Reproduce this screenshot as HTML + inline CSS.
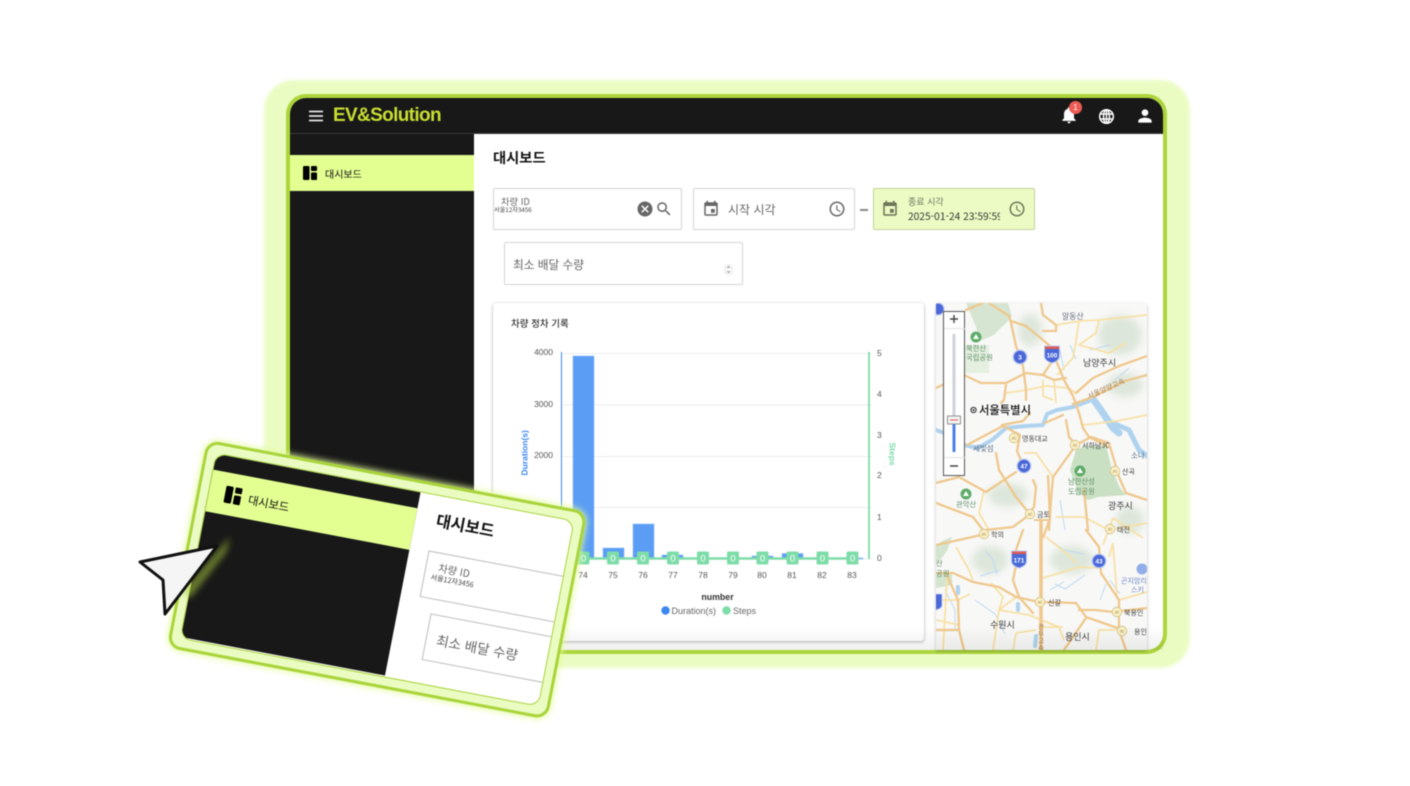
<!DOCTYPE html>
<html lang="ko"><head><meta charset="utf-8"><title>EV&amp;Solution</title>
<style>
html,body{margin:0;padding:0;background:#fff}
body{width:1410px;height:786px;overflow:hidden;position:relative;font-family:"Noto Sans CJK KR","Liberation Sans",sans-serif}
#root{position:absolute;left:0;top:0;width:1410px;height:786px;filter:blur(.4px)}
.a{position:absolute;box-sizing:border-box;white-space:nowrap}
svg{display:block}
.field{border:1px solid #d4d4d4;border-radius:2px;background:#fff}
.g{color:#666}
</style></head><body><div id="root">
<div class="a" style="left:264px;top:80px;width:926px;height:588px;background:#ebfcc3;border-radius:30px;filter:blur(1.500px)"></div>
<div class="a" style="left:286px;top:94px;width:881px;height:560px;background:#acd53c;border-radius:20px"></div>
<div class="a" style="left:290px;top:98px;width:873px;height:552px;background:#fff;border-radius:16px;overflow:hidden">
  <div class="a" style="left:0;top:0;width:873px;height:36px;background:#181818;border-bottom:1px solid #3a3a3a"></div>
  <div class="a" style="left:0;top:36px;width:184px;height:516px;background:#181818"></div>
  <div class="a" style="left:0;top:57px;width:184px;height:36px;background:#e3fe91"></div>
</div>
<svg class="a" style="left:309px;top:110px" width="14" height="12"><path d="M0 1.500h14M0 6h14M0 10.500h14" stroke="#fff" stroke-width="1.600"/></svg>
<div class="a" style="left:333px;top:104px;font-family:'Liberation Sans',sans-serif;font-size:19px;line-height:23px;font-weight:700;color:#c9de30;letter-spacing:-.65px">EV&amp;Solution</div>
<svg class="a" style="left:1059px;top:105px" width="20" height="20" viewBox="0 0 24 24"><path fill="#fff" d="M12 22c1.100 0 2-.9 2-2h-4c0 1.100.9 2 2 2zm6-6v-5c0-3.070-1.630-5.640-4.500-6.320V4c0-.83-.67-1.500-1.500-1.500s-1.500.67-1.500 1.500v.68C7.640 5.360 6 7.920 6 11v5l-2 2v1h16v-1l-2-2z"/></svg>
<div class="a" style="left:1069px;top:101px;width:13px;height:13px;border-radius:50%;background:#ee5b52;color:#fff;font-family:'Liberation Sans',sans-serif;font-size:8px;line-height:13px;text-align:center">1</div>
<svg class="a" style="left:1098px;top:107.500px" width="17" height="17" viewBox="0 0 17 17" fill="none" stroke="#fff" stroke-width="1.500"><circle cx="8.500" cy="8.500" r="6.800"/><ellipse cx="8.500" cy="8.500" rx="3" ry="6.800"/><path d="M2 6h13M2 11h13M8.500 2v13"/></svg>
<svg class="a" style="left:1135px;top:105.500px" width="20" height="20" viewBox="0 0 24 24"><path fill="#fff" d="M12 12c2.210 0 4-1.790 4-4s-1.790-4-4-4-4 1.790-4 4 1.790 4 4 4zm0 2c-2.670 0-8 1.340-8 4v2h16v-2c0-2.660-5.330-4-8-4z"/></svg>
<svg class="a" style="left:303px;top:166px" width="15" height="15"><rect x="0" y="0" width="6.500" height="14" rx="1.200" fill="#000"/><rect x="8" y="0" width="6" height="5" rx="1" fill="#000"/><rect x="8" y="6.500" width="6" height="7.500" rx="1" fill="#000"/></svg>
<div class="a" style="left:325px;top:166px;font-size:10px;line-height:15px;color:#111">대시보드</div>
<div class="a" style="left:493px;top:148px;font-size:14.300px;line-height:20px;font-weight:700;color:#111">대시보드</div>

<div class="a field" style="left:493px;top:188px;width:189px;height:42px"></div>
<div class="a g" style="left:501px;top:195px;font-size:9.300px;line-height:13px">차량 ID</div>
<div class="a" style="left:494px;top:204px;font-size:6.200px;line-height:11px;color:#444">서울12자3456</div>
<svg class="a" style="left:636px;top:200px" width="18" height="18" viewBox="0 0 24 24"><path fill="#666" d="M12 2C6.470 2 2 6.470 2 12s4.470 10 10 10 10-4.470 10-10S17.530 2 12 2zm5 13.590L15.590 17 12 13.410 8.410 17 7 15.590 10.590 12 7 8.410 8.410 7 12 10.590 15.590 7 17 8.410 13.410 12 17 15.590z"/></svg>
<svg class="a" style="left:655px;top:200px" width="18" height="18" viewBox="0 0 24 24"><path fill="#666" d="M15.500 14h-.79l-.28-.27C15.410 12.590 16 11.110 16 9.500 16 5.910 13.090 3 9.500 3S3 5.910 3 9.500 5.910 16 9.500 16c1.610 0 3.090-.59 4.230-1.570l.27.28v.79l5 4.990L20.490 19l-4.990-5zm-6 0C7.010 14 5 11.990 5 9.500S7.010 5 9.500 5 14 7.010 14 9.500 11.990 14 9.500 14z"/></svg>

<div class="a field" style="left:693px;top:188px;width:162px;height:42px"></div>
<svg class="a" style="left:702px;top:200px" width="18" height="18" viewBox="0 0 24 24"><path fill="#666" d="M17 12h-5v5h5v-5zM16 1v2H8V1H6v2H5c-1.110 0-1.990.9-1.990 2L3 19c0 1.100.89 2 2 2h14c1.100 0 2-.9 2-2V5c0-1.100-.9-2-2-2h-1V1h-2zm3 18H5V8h14v11z"/></svg>
<div class="a g" style="left:728px;top:201px;font-size:12px;line-height:18px">시작 시각</div>
<svg class="a" style="left:828px;top:200px" width="18" height="18" viewBox="0 0 24 24"><path fill="#666" d="M11.990 2C6.470 2 2 6.480 2 12s4.470 10 9.990 10C17.520 22 22 17.520 22 12S17.520 2 11.990 2zM12 20c-4.420 0-8-3.580-8-8s3.580-8 8-8 8 3.580 8 8-3.580 8-8 8zm.5-13H11v6l5.250 3.150.75-1.230-4.500-2.670z"/></svg>
<div class="a" style="left:860px;top:209px;width:8px;height:1.500px;background:#888"></div>

<div class="a" style="left:873px;top:188px;width:162px;height:42px;background:#ebfbc3;border:1px solid #c3d39a;border-radius:2px"></div>
<svg class="a" style="left:881px;top:200px" width="18" height="18" viewBox="0 0 24 24"><path fill="#6d7559" d="M17 12h-5v5h5v-5zM16 1v2H8V1H6v2H5c-1.110 0-1.990.9-1.990 2L3 19c0 1.100.89 2 2 2h14c1.100 0 2-.9 2-2V5c0-1.100-.9-2-2-2h-1V1h-2zm3 18H5V8h14v11z"/></svg>
<div class="a" style="left:908px;top:195px;font-size:9px;line-height:13px;color:#6f7560">종료 시각</div>
<div class="a" style="left:908px;top:208px;width:92px;overflow:hidden;font-size:10.200px;line-height:16px;color:#333">2025-01-24 23:59:59</div>
<svg class="a" style="left:1008px;top:200px" width="18" height="18" viewBox="0 0 24 24"><path fill="#6d7559" d="M11.990 2C6.470 2 2 6.480 2 12s4.470 10 9.990 10C17.520 22 22 17.520 22 12S17.520 2 11.990 2zM12 20c-4.420 0-8-3.580-8-8s3.580-8 8-8 8 3.580 8 8-3.580 8-8 8zm.5-13H11v6l5.250 3.150.75-1.230-4.500-2.670z"/></svg>

<div class="a field" style="left:504px;top:242px;width:239px;height:43px"></div>
<div class="a g" style="left:513px;top:256px;font-size:11.700px;line-height:18px">최소 배달 수량</div>
<svg class="a" style="left:724px;top:264px" width="9" height="11" fill="none" stroke="#777" stroke-width=".8"><rect x="1" y="0.500" width="7" height="10" rx="3" stroke="#ddd"/><path d="M3 4l1.500-1.500L6 4M3 7l1.500 1.500L6 7"/></svg>

<!-- chart card -->
<div class="a" style="left:493px;top:303px;width:431px;height:338px;background:#fff;border-radius:3px;box-shadow:0 1px 3px rgba(0,0,0,.28),0 0 2px rgba(0,0,0,.08)"></div>
<svg class="a" style="left:493px;top:303px" width="431" height="338" viewBox="493 303 431 338">
<g stroke="#ececec" stroke-width="1"><path d="M563 353.500H872M563 405H872M563 456.500H872M563 507.500H872M563 559H872"/></g>
<path d="M561.500 352V559" stroke="#3b87ee" stroke-width="1"/>
<path d="M869 352V559" stroke="#7edca9" stroke-width="1.800"/>
<g fill="#5b9df5" stroke="#8cbcf8" stroke-width=".6">
<rect x="573" y="356" width="21" height="203"/><rect x="603" y="548" width="21" height="11"/><rect x="633" y="524" width="21" height="35"/><rect x="662" y="555" width="21" height="4"/><rect x="752" y="556" width="21" height="3"/><rect x="782" y="553.500" width="21" height="5.500"/><rect x="812" y="558" width="21" height="1"/><rect x="842" y="558" width="21" height="1"/></g>
<path d="M578 558.500H858" stroke="#7edca9" stroke-width="2.400"/>
<g fill="#7edca9"><rect x="577.500" y="551.500" width="12" height="13" rx="1.500"/><rect x="607" y="551.500" width="12" height="13" rx="1.500"/><rect x="637" y="551.500" width="12" height="13" rx="1.500"/><rect x="667" y="551.500" width="12" height="13" rx="1.500"/><rect x="697" y="551.500" width="12" height="13" rx="1.500"/><rect x="727" y="551.500" width="12" height="13" rx="1.500"/><rect x="756.500" y="551.500" width="12" height="13" rx="1.500"/><rect x="786.500" y="551.500" width="12" height="13" rx="1.500"/><rect x="816.500" y="551.500" width="12" height="13" rx="1.500"/><rect x="846.500" y="551.500" width="12" height="13" rx="1.500"/></g>
<g fill="#fff" font-size="9.500" text-anchor="middle" font-family="Liberation Sans"><text x="583.500" y="561.500">0</text><text x="613" y="561.500">0</text><text x="643" y="561.500">0</text><text x="673" y="561.500">0</text><text x="703" y="561.500">0</text><text x="733" y="561.500">0</text><text x="762.500" y="561.500">0</text><text x="792.500" y="561.500">0</text><text x="822.500" y="561.500">0</text><text x="852.500" y="561.500">0</text></g>
<g fill="#555" font-size="8.500" font-family="Liberation Sans">
<g text-anchor="end"><text x="553" y="355">4000</text><text x="553" y="407">3000</text><text x="553" y="458">2000</text></g>
<text x="877" y="356">5</text><text x="877" y="397">4</text><text x="877" y="438">3</text><text x="877" y="478">2</text><text x="877" y="520">1</text><text x="877" y="561">0</text>
<g text-anchor="middle"><text x="583" y="578">74</text><text x="613" y="578">75</text><text x="643" y="578">76</text><text x="673" y="578">77</text><text x="703" y="578">78</text><text x="733" y="578">79</text><text x="762" y="578">80</text><text x="792" y="578">81</text><text x="822" y="578">82</text><text x="852" y="578">83</text></g></g>
<text transform="translate(527.500 475.500) rotate(-90)" fill="#3b87ee" font-size="8.500" font-weight="700" font-family="Liberation Sans">Duration(s)</text>
<text transform="translate(889.500 442.500) rotate(90)" fill="#7edca9" font-size="8.500" font-weight="700" font-family="Liberation Sans">Steps</text>
<text x="717.500" y="600" text-anchor="middle" fill="#333" font-size="8.800" font-weight="700" font-family="Liberation Sans">number</text>
<circle cx="665.500" cy="610.500" r="4.200" fill="#3b87ee"/><circle cx="726.500" cy="610.500" r="4.200" fill="#7edca9"/>
<text x="671.500" y="614" fill="#666" font-size="9" font-family="Liberation Sans">Duration(s)</text>
<text x="733" y="614" fill="#666" font-size="9" font-family="Liberation Sans">Steps</text>
<text x="511" y="327" fill="#333" font-size="9.500" font-weight="500" font-family="Noto Sans CJK KR,sans-serif">차량 정차 기록</text>
</svg>

<!-- map -->
<div class="a" style="left:936px;top:303px;width:211px;height:347px;box-shadow:0 1px 3px rgba(0,0,0,.25);border-radius:3px 3px 0 0;background:#f8f8f7"></div>
<svg class="a" style="left:936px;top:303px" width="211" height="347" viewBox="936 303 211 347" font-family="Noto Sans CJK KR,Liberation Sans,sans-serif">
<defs><filter id="b" x="-30%" y="-30%" width="160%" height="160%"><feGaussianBlur stdDeviation="4"/></filter></defs>
<path d="M966 303h42l4 14-18 18-14 6-4-14z" fill="#d6e5d2"/>
<rect x="965" y="345" width="24" height="28" fill="#e4efe0"/>
<g fill="#dde6da" filter="url(#b)"><ellipse cx="1030" cy="330" rx="12" ry="16"/><ellipse cx="1120" cy="335" rx="22" ry="20"/><ellipse cx="1125" cy="385" rx="18" ry="12"/><ellipse cx="1008" cy="495" rx="20" ry="12"/><ellipse cx="1072" cy="560" rx="22" ry="14"/><ellipse cx="990" cy="560" rx="18" ry="14"/><ellipse cx="1130" cy="520" rx="14" ry="14"/></g>
<path d="M1076 450L1086 446 1106 445 1112 470 1120 488 1126 495 1098 497 1088 500 1078 492 1070 470Z" fill="#c9e0c2"/>
<path d="M936 545l8-5 8-3-5 14-11 14zM936 575l16-2 0 12-16 3z" fill="#d3e5cf"/>
<g fill="none" stroke="#afd3ef" stroke-linejoin="round" stroke-linecap="round">
<path d="M936 430l8 3M964 445l14 3 14-8 14-12 20-2 17-1 4-11 10-4 16-3 16-6" stroke-width="4"/>
<path d="M1093 399l10 14 10 15 6 5" stroke-width="7"/>
<path d="M1106 420l23 10 10 20 8 6M1147 303" stroke-width="5"/>
<path d="M958 587l0 6M1018 604l0 6M1036 636l-1 10" stroke-width="4"/></g>
<g fill="none" stroke="#bdd9f2" stroke-width="1"><path d="M985 550l8 10 4 14M945 590l10 20 0 20M1050 540l14 10 20 4M1110 580l10 14M1060 500l5 30M1085 575l-20 14-10-5M975 600l20 14 10 20M1115 380l14-12M1060 350l4 20M1090 350l20-5M1000 570l-20 6M1050 590l14-8M1070 345l6 14M1100 600l6-16"/></g>
<g fill="none" stroke="#f7e1a6" stroke-width="1.800" stroke-linejoin="round">
<path d="M1056 325l23-4 20-1 48-5M1099 320l-3 13-17 12 30 8 17-10M1079 321l-3 20-3 17-16 17"/>
<path d="M1006 393l20-3 20-4 22 2 8 5M1043 380v16l10 4M1054 380l2 23"/>
<path d="M1083 425l34-4 30-6M1053 477l-17-24-12 0M984 490l-5 23 10 17M1056 517l28 0 25 13 38-7"/>
<path d="M956 547l13 23 4 10M991 583l12 14-4 13 30 5 30 12 5 13M1043 578l36-11 22 1M1046 537l20 16 10 10M1109 557l4-14M1119 600l28-8"/>
<path d="M1016 597l-17 13-6 40M936 600l22 0 12-6M1013 650l3-17 20-3M1043 627l20 0M1096 650l3-20 17 0M1113 518l30 20M1103 545l10-27M1113 545l4 50M947 578l-4 72M936 620l23 5"/>
</g>
<g fill="none" stroke="#efc88d" stroke-width="2.300" stroke-linejoin="round" stroke-linecap="round">
<path d="M989 303l20 13 2 7 5 23 7 20 3 24v10"/><path d="M1011 321l15 5 17 14 7 6"/><path d="M1041 303l2 12 13 10v6h-13"/><path d="M966 310l17-7"/>
<path d="M1053 360l-10 15 11 5 12-2M1056 360l8 20 9 16 6 17 4 15 6 9 18 9"/><path d="M936 388l28-13 17 8h25l20-10 17 2"/><path d="M1006 385l-2 15-3 3"/>
<path d="M1076 393l17-15 26-12 28-10"/><path d="M1073 404l20-7 32-16 22-6"/>
<path d="M1002 425l21-4 7-8M1045 423l18-8"/>
<path d="M967 445l36-19 17 9-3 16 6 14"/>
<path d="M1066 420l3 17 7 8 15-8 18 6 10 34 7 16 21 7"/><path d="M1076 445l-23 32-2 23-2 30"/><path d="M996 453l3 17 17 27 13 16"/><path d="M936 483l23-6 27 15 30-20"/><path d="M1033 480l3 7-2 20-5 6"/><path d="M1084 490l4 40"/>
<path d="M936 503l37 14 10 13M1029 515l-16 12-27 3"/>
<path d="M936 573h17l20 9 26 5 17 10 23 5 37 1 10 14 37 13"/><path d="M936 545l23-5 22-5"/><path d="M1016 565l-3 15 6 17 14 16"/><path d="M1023 530l-7 20"/><path d="M1086 530l13 17 2 26 18 27v30l7 20"/><path d="M946 573l12 27 1 30 5 20"/><path d="M936 630l23 0"/><path d="M1079 610h17l17 2 34-4"/><path d="M1086 618l-22 32"/>
</g>
<path d="M1041 520V650" stroke="#efc88d" stroke-width="3.500" fill="none"/>
<path d="M1048 475l2 43-7 20" stroke="#efc88d" stroke-width="2.300" fill="none"/>
<path d="M1034 520l16 0" stroke="#efc88d" stroke-width="2" fill="none"/>
<text transform="translate(1089 399) rotate(-24)" font-size="7.200" fill="#a87b4a">서울양양고속</text>
<g font-size="6.500" fill="#a87b4a" text-anchor="middle"><text x="1041" y="629">경</text><text x="1041" y="636">부</text><text x="1041" y="643">고</text><text x="1041" y="650">속</text></g>
<text x="1062" y="319" font-size="7.800" fill="#5f6a7b">알동산</text>
<g font-size="9" fill="#3c3c3c"><text x="1083" y="366">남양주시</text><text x="1108" y="509">광주시</text><text x="990" y="628">수원시</text><text x="1065" y="640">용인시</text></g>
<text x="979" y="414" font-size="11.300" fill="#111" font-weight="500">서울특별시</text>
<circle cx="973.500" cy="410" r="2.600" fill="#fff" stroke="#222"/><circle cx="973.500" cy="410" r="1" fill="#222"/>
<g font-size="7.300" fill="#5d8f66"><text x="1068" y="484">남한산성</text><text x="1068" y="494">도립공원</text><text x="966" y="351">북한산</text><text x="966" y="360">국립공원</text><text x="956" y="507">관악산</text><text x="936" y="566">산</text><text x="936" y="576">공원</text></g>
<g font-size="7.500" fill="#5a6b85"><text x="973" y="451">세빛섬</text><text x="1131" y="458">소나</text></g>
<g font-size="7" fill="#444"><text x="1022" y="441">영동대교</text><text x="1082" y="448">서하남JC</text><text x="1122" y="474">산곡</text><text x="1037" y="517">금토</text><text x="991" y="537">학의</text><text x="1117" y="532">태전</text><text x="1048" y="605">신갈</text><text x="1124" y="615">북용인</text><text x="1134" y="634">용인</text></g>
<g font-size="7" fill="#6d83c4"><text x="1121" y="583">곤지암리</text><text x="1131" y="592">스키</text></g>
<g fill="#5eac6a"><circle cx="976" cy="337" r="5.500"/><circle cx="1080" cy="471" r="5.500"/><circle cx="966" cy="494" r="5.500"/></g>
<g fill="#fff"><path d="M976 334l-3 5h6zM1080 468l-3 5h6zM966 491l-3 5h6z"/></g>
<circle cx="1142" cy="569" r="5.500" fill="#92aeea"/>
<g fill="#f9efc4" stroke="#d2c08a" stroke-width=".8"><circle cx="1014" cy="438" r="4.800"/><circle cx="1075" cy="445" r="4.800"/><circle cx="1115" cy="471" r="4.800"/><circle cx="1030" cy="514" r="4.800"/><circle cx="984" cy="534" r="4.800"/><circle cx="1110" cy="529" r="4.800"/><circle cx="1040" cy="602" r="4.800"/><circle cx="1117" cy="612" r="4.800"/><circle cx="1122" cy="631" r="4.800"/></g>
<g font-size="4" fill="#8a6d2a" text-anchor="middle" font-family="Liberation Sans"><text x="1014" y="439.500">JC</text><text x="1075" y="446.500">JC</text><text x="1115" y="472.500">JC</text><text x="1030" y="515.500">JC</text><text x="984" y="535.500">JC</text><text x="1110" y="530.500">JC</text><text x="1040" y="603.500">JC</text><text x="1117" y="613.500">JC</text><text x="1122" y="632.500">JC</text></g>
<g fill="#4a68d8" stroke="#bcc8f2" stroke-width="1.200"><circle cx="1020" cy="357" r="6.800"/><circle cx="1024" cy="466" r="6.800"/><circle cx="1099" cy="561" r="6.800"/><circle cx="938" cy="309" r="6"/></g>
<g fill="#4a68d8" stroke="#bcc8f2" stroke-width="1"><path d="M1044.500 346h15v10c0 4-4 6-7.500 7-3.500-1-7.500-3-7.500-7zM1011.500 551h15v10c0 4-4 6-7.500 7-3.500-1-7.500-3-7.500-7zM930 594h12v11c0 3-3 4-6 5-3-1-6-2-6-5z"/></g>
<path d="M1045 346.500h14v2.500h-14zM1012 551.500h14v2.500h-14z" fill="#e05b52"/>
<g fill="#fff" font-size="6.500" font-weight="700" text-anchor="middle" font-family="Liberation Sans"><text x="1020" y="359.500">3</text><text x="1024" y="468.500">47</text><text x="1099" y="563.500">43</text><text x="1052" y="357.500">100</text><text x="1019" y="562.500">171</text></g>
</svg>
<!-- bottom fade -->
<div class="a" style="left:474px;top:626px;width:689px;height:24px;background:linear-gradient(rgba(0,0,0,0),rgba(0,0,0,.06))"></div>
<!-- map zoom control -->
<div class="a" style="left:943px;top:311px;width:22px;height:165px;background:rgba(255,255,255,.93);border:1px solid #555"></div>
<div class="a" style="left:943.500px;top:328px;width:21px;height:1px;background:#e2e2e2"></div>
<div class="a" style="left:943.500px;top:457px;width:21px;height:1px;background:#e2e2e2"></div>
<svg class="a" style="left:943px;top:311px" width="22" height="165"><path d="M7 8h8M11 4v8M7 155h8" stroke="#444" stroke-width="1.400"/><rect x="9.500" y="23" width="3" height="88" fill="#cfd2d8"/><rect x="9.500" y="112" width="3" height="29" fill="#4a80e8"/><rect x="4.500" y="105" width="13" height="8" fill="#f4f4f4" stroke="#777" stroke-width=".8"/><path d="M7 109h8" stroke="#e05b52"/></svg>

<!-- floating card -->
<div class="a" style="left:0;top:0;width:388px;height:210px;transform-origin:0 0;transform:matrix(.981,.1856,-.192,.99,207,439.700);background:#ebfcc3;border:3px solid #a9d43a;border-radius:13px;box-shadow:0 0 7px 1px #e2fb9a">
  <div class="a" style="left:8px;top:8px;width:366px;height:188px;border:1.800px solid #a9d43a;border-radius:11px;background:#fff;overflow:hidden">
    <div class="a" style="left:0;top:0;width:208px;height:185px;background:#181818"></div>
    <div class="a" style="left:0;top:16px;width:208px;height:42px;background:#e3fe91"></div>
    <svg class="a" style="left:16px;top:29px" width="17" height="18"><rect x="0" y="0" width="7.500" height="17" rx="1.400" fill="#000"/><rect x="9.500" y="0" width="7" height="6" rx="1" fill="#000"/><rect x="9.500" y="8" width="7" height="9" rx="1" fill="#000"/></svg>
    <div class="a" style="left:40px;top:31px;font-size:11.300px;line-height:17px;color:#111">대시보드</div>
    <div class="a" style="left:229px;top:11px;font-size:16px;line-height:24px;font-weight:700;color:#111">대시보드</div>
    <div class="a" style="left:227px;top:55px;width:240px;height:47px;border:1px solid #bdbdbd"></div>
    <div class="a g" style="left:240px;top:62px;font-size:10.300px;line-height:15px">차량 ID</div>
    <div class="a" style="left:234px;top:75px;font-size:7.200px;line-height:12px;color:#444">서울12자3456</div>
    <div class="a" style="left:241px;top:116px;width:240px;height:47px;border:1px solid #bdbdbd"></div>
    <div class="a g" style="left:252px;top:130px;font-size:13.600px;line-height:20px">최소 배달 수량</div>
  </div>
</div>
<!-- cursor -->
<svg class="a" style="left:130px;top:525px" width="120" height="100" viewBox="130 525 120 100">
<defs><filter id="c" x="-50%" y="-50%" width="200%" height="200%"><feGaussianBlur stdDeviation="3.500"/></filter></defs>
<path d="M182 592L230 537 226 552 190 598Z" fill="#a9c93e" opacity=".6" filter="url(#c)"/>
<path d="M140 562L217 546 165 614 163 580Z" fill="#f5f5f5" stroke="#111" stroke-width="3" stroke-linejoin="round"/>
</svg>
</div></body></html>
